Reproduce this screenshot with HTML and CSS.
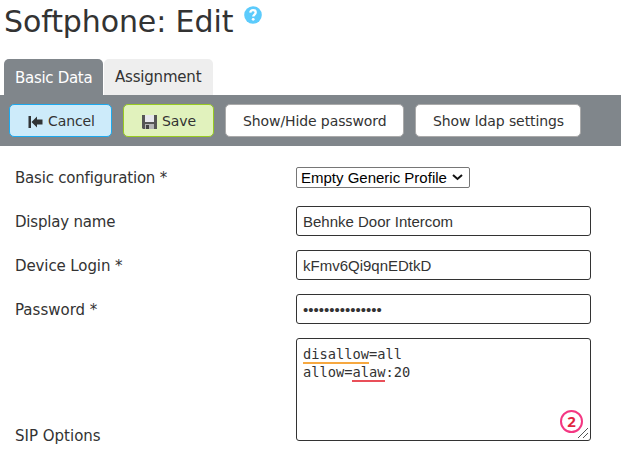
FILE: index.html
```html
<!DOCTYPE html>
<html lang="en">
<head>
<meta charset="utf-8">
<title>Softphone: Edit</title>
<link rel="stylesheet" href="styles.css">
</head>
<body>
<header class="heading">
  <h1 class="title">Softphone: Edit</h1>
  <svg class="help" viewBox="0 0 18 18"><circle cx="9" cy="9" r="8.8" fill="#5ccbfc"/><path d="M6.300 6.700C6.500 4.900 7.600 4.200 9 4.200c1.600 0 2.700.9 2.700 2.300C11.700 8.500 9.200 8.600 9.200 10.600" fill="none" stroke="#fff" stroke-width="2.300"/><circle cx="9.200" cy="13.300" r="1.400" fill="#fff"/></svg>
</header>
<nav class="tabs">
  <a class="tab tab-active">Basic Data</a>
  <a class="tab">Assignment</a>
</nav>
<div class="toolbar">
  <button class="btn btn-cancel"><svg class="icon" viewBox="0 0 15 14"><path d="M.5 1H3v12H.5zM3.500 7L9 1.500V4.500h5.500v5H9v3z" fill="#303436"/></svg><span>Cancel</span></button>
  <button class="btn btn-save"><svg class="icon" viewBox="0 0 15 14"><path d="M0 0h15v14H1L0 13z" fill="#555"/><path d="M3 0h9v7H3z" fill="#e8e8ed"/><path d="M3 9h9v5H3z" fill="#b5b5b5"/><path d="M4 10h3v4H4z" fill="#444"/></svg><span>Save</span></button>
  <button class="btn btn-password"><span>Show/Hide password</span></button>
  <button class="btn btn-ldap"><span>Show ldap settings</span></button>
</div>
<main class="form">
  <div class="row"><label class="label l-config">Basic configuration *</label><div class="select"><span>Empty Generic Profile</span><svg class="chevron" viewBox="0 0 11 7"><path d="M1 1l4.500 4L10 1" fill="none" stroke="#111" stroke-width="2"/></svg></div></div>
  <div class="row"><label class="label l-name">Display name</label><div class="field">Behnke Door Intercom</div></div>
  <div class="row"><label class="label l-login">Device Login *</label><div class="field">kFmv6Qi9qnEDtkD</div></div>
  <div class="row"><label class="label">Password *</label><div class="field password">•••••••••••••••</div></div>
  <div class="row row-options"><label class="label">SIP Options</label>
    <div class="area"><div><span class="mark mark-orange">disallow</span>=all</div><div>allow=<span class="mark mark-red">alaw</span>:20</div>
      <span class="count">2</span>
      <svg class="grip" viewBox="0 0 10 10"><path d="M0 10L10 0M5 10l5-5" stroke="#555" stroke-width="1" fill="none"/></svg>
    </div>
  </div>
</main>
</body>
</html>
```
FILE: styles.css
```css
* { box-sizing: border-box; }
body { margin: 0; width: 621px; height: 467px; overflow: hidden; background: #fff; color: #333; font: 15px "DejaVu Sans", Verdana, sans-serif; }
.heading { height: 59px; display: flex; align-items: flex-start; padding-left: 4px; }
.title { margin: 4px 0 0; width: 240px; font-size: 30px; line-height: 36px; font-weight: 400; letter-spacing: -.1px; white-space: nowrap; }
.help { width: 18px; height: 18px; margin-top: 6px; }
.tabs { height: 36px; display: flex; gap: 1px; padding-left: 4px; }
.tab { height: 36px; padding: 0 11px; width: 99px; border-radius: 5px 5px 0 0; background: #eee; line-height: 36px; letter-spacing: -.2px; white-space: nowrap; }
.tab + .tab { width: 109px; }
.tab-active { background: #80868b; color: #fff; line-height: 38px; letter-spacing: -.3px; }
.toolbar { height: 51px; background: #80868b; display: flex; align-items: flex-start; padding: 9px 0 0 9px; }
.btn { height: 33px; display: flex; align-items: center; padding: 0 0 0 17px; border: 1px solid #aaa; border-radius: 5px; background: #fff; color: #333; font: 14px "DejaVu Sans", Verdana, sans-serif; letter-spacing: -.1px; white-space: nowrap; }
.btn-cancel { width: 103px; padding-left: 18px; background: #cdebfa; border-color: #1ca9ee; margin-right: 11px; }
.btn-save { width: 91px; padding-left: 18px; background: #e1f2bd; border-color: #98ca22; margin-right: 11px; }
.btn-password { width: 179px; margin-right: 11px; }
.btn-ldap { width: 166px; }
.icon { width: 15px; height: 14px; margin: 2px 5px 0 0; flex: none; }
.form { padding: 10px 0 0 15px; }
.row { height: 44px; display: flex; align-items: center; }
.label { width: 281px; flex: none; white-space: nowrap; }
.l-config, .l-name { letter-spacing: -.2px; }
.l-login { letter-spacing: -.1px; }
.select { width: 174px; height: 21px; margin-bottom: 2px; border: 1px solid #767676; border-radius: 2px; display: flex; align-items: center; justify-content: space-between; padding: 0 6px 0 4px; font: 15px "Liberation Sans", Arial, sans-serif; color: #000; white-space: nowrap; }
.field { width: 295px; height: 30px; margin-bottom: 2px; border: 1px solid #333; border-radius: 3px; padding: 1px 6px 0; line-height: 28px; font-family: "Liberation Sans", Arial, sans-serif; white-space: nowrap; }
.chevron { width: 11px; height: 7px; }
.row-options { height: 103px; margin-top: 6px; align-items: flex-end; }
.row-options .label { line-height: 10px; }
.area { position: relative; width: 295px; height: 103px; border: 1px solid #333; border-radius: 3px; padding: 6px 6px; font: 13.700px/18px "DejaVu Sans Mono", Consolas, monospace; }
.mark { display: inline-block; height: 19px; border-bottom: 2px solid; vertical-align: top; }
.area > div { height: 18px; }
.mark-orange { border-color: #f6a840; }
.mark-red { border-color: #e94f59; }
.count { position: absolute; right: 7px; bottom: 7px; width: 23px; height: 23px; border: 2px solid #f43782; border-radius: 50%; color: #e22441; font: bold 15px/19px "Noto Sans", sans-serif; text-align: center; }
.grip { position: absolute; right: 2px; bottom: 2px; width: 10px; height: 10px; }
```
